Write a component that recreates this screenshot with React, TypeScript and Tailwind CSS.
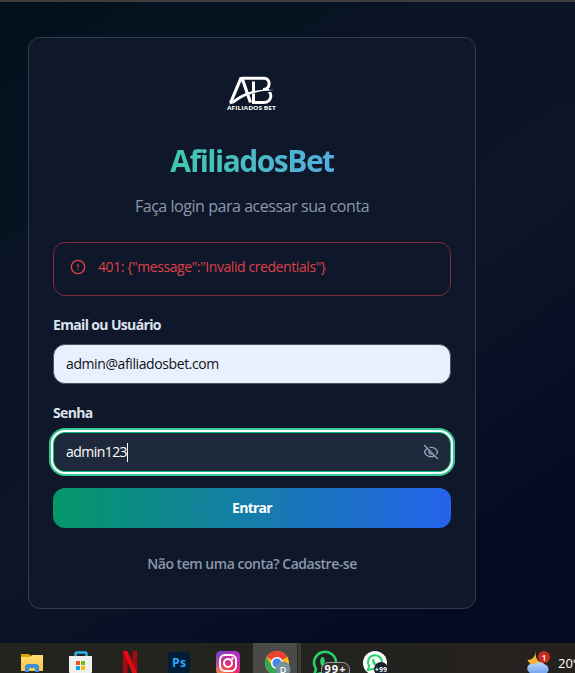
import React from "react";

const font = "font-['Open_Sans','Noto_Sans',sans-serif]";

function Logo() {
  return (
    <svg viewBox="0 0 52 36" className="h-9 w-[52px]" fill="none" stroke="white">
      <path d="M4.500 28 14.800 3.500h1.400l8.300 24" strokeWidth="3.200" />
      <path d="M16 3.300h22c7 0 7 11.200-1 11.200M27.500 6.500v21M26 27.500h11.500c9.500 0 9.500-12 1.500-13" strokeWidth="3" />
      <path d="M4 30C14 20 28 15.500 48 16.300" stroke="#0f172a" strokeWidth="1.500" />
      <path d="M3 29.500C13 18.500 28 13.300 49 15C31 15.300 17 20.500 8 28.300Z" fill="white" stroke="none" />
      <text x="1" y="34.600" fill="white" stroke="none" fontSize="6" fontWeight="700" textLength="49" lengthAdjust="spacingAndGlyphs" fontFamily="Open Sans, sans-serif">AFILIADOS BET</text>
    </svg>
  );
}

function AlertIcon() {
  return (
    <svg viewBox="0 0 24 24" className="h-4 w-4 shrink-0" fill="none" stroke="currentColor" strokeWidth="2" strokeLinecap="round">
      <circle cx="12" cy="12" r="10" />
      <path d="M12 8v4M12 16h.01" />
    </svg>
  );
}

function EyeOff() {
  return (
    <svg viewBox="0 0 24 24" className="h-4 w-4 text-slate-400" fill="none" stroke="currentColor" strokeWidth="2" strokeLinecap="round" strokeLinejoin="round">
      <path d="M9.880 9.880a3 3 0 1 0 4.240 4.240" />
      <path d="M10.730 5.080A10.430 10.430 0 0 1 12 5c7 0 10 7 10 7a13.160 13.160 0 0 1-1.670 2.680" />
      <path d="M6.610 6.610A13.526 13.526 0 0 0 2 12s3 7 10 7a9.740 9.740 0 0 0 5.390-1.610" />
      <path d="m2 2 20 20" />
    </svg>
  );
}

function Taskbar() {
  return (
    <footer className="h-[30px] w-full overflow-hidden bg-[#22231e]">
      <svg width="575" height="30" viewBox="0 0 575 30" fontFamily="Open Sans, sans-serif">
        <defs>
          <linearGradient id="bar" x1="0" x2="1">
            <stop stopColor="#22251d" />
            <stop offset="1" stopColor="#25211f" />
          </linearGradient>
          <linearGradient id="insta" x1="0" y1="1" x2="1" y2="0">
            <stop stopColor="#ffb02e" />
            <stop offset=".45" stopColor="#f02c62" />
            <stop offset="1" stopColor="#a32ce0" />
          </linearGradient>
          <linearGradient id="instaBlue" x1="0" y1="0" x2=".6" y2=".6">
            <stop stopColor="#4b52e8" />
            <stop offset="1" stopColor="#c02cb0" stopOpacity="0" />
          </linearGradient>
          <linearGradient id="cloud" x1="0" y1="0" x2="0" y2="1">
            <stop stopColor="#b7d6ff" />
            <stop offset="1" stopColor="#77a6ee" />
          </linearGradient>
          <linearGradient id="folder" x1="0" y1="0" x2="0" y2="1">
            <stop stopColor="#ffdd72" />
            <stop offset="1" stopColor="#f7c548" />
          </linearGradient>
        </defs>
        <rect width="575" height="30" fill="url(#bar)" />

        <path d="M21 11h8l2 2h11v15H21z" fill="#dfa008" />
        <path d="M21 14h9l2-2h11v16H21z" fill="url(#folder)" />
        <path d="M25 29v-6l2-2h10l2 2v6h-4v-4h-6v4z" fill="#3b91db" />

        <path d="M75.500 14v-3q0-1.500 1.500-1.500h8q1.500 0 1.500 1.500v3" fill="none" stroke="#28b3ee" strokeWidth="2.500" />
        <path d="M69 13h23v15q0 3-3 3H72q-3 0-3-3z" fill="#f1f1f1" />
        <path d="M76 18h4v4h-4z" fill="#f25022" />
        <path d="M81 18h4v4h-4z" fill="#7fba00" />
        <path d="M76 23h4v4h-4z" fill="#00a4ef" />
        <path d="M81 23h4v4h-4z" fill="#ffb900" />

        <path d="M123 8h4.500v22H123zM132.500 8h4.500v22h-4.500z" fill="#a90912" />
        <path d="M123 8h4.500l9.500 22h-4.800z" fill="#e50914" />

        <rect x="168" y="9" width="22" height="22" rx="4" fill="#001e36" />
        <text x="172" y="24" fill="#31a8ff" fontSize="12" fontWeight="700" textLength="14">Ps</text>

        <rect x="216" y="8" width="24" height="24" rx="5" fill="url(#insta)" />
        <rect x="216" y="8" width="24" height="24" rx="5" fill="url(#instaBlue)" />
        <rect x="220" y="12" width="16" height="16" rx="5" fill="none" stroke="white" strokeWidth="2" />
        <circle cx="228" cy="20" r="4" fill="none" stroke="white" strokeWidth="2" />
        <circle cx="232.500" cy="15.500" r="1.200" fill="white" />

        <rect x="253" width="44" height="30" fill="#4a4b46" />
        <rect x="298" width="3" height="30" fill="#3b3c36" />
        <circle cx="277" cy="20" r="12" fill="#fbc116" />
        <path d="M277 20 266.600 14A12 12 0 0 1 287.400 14Z" fill="#ea4335" />
        <path d="M266.600 14A12 12 0 0 0 277 32L282 23 272 23Z" fill="#34a853" />
        <circle cx="277" cy="20" r="6" fill="white" />
        <circle cx="277" cy="20" r="4.500" fill="#4285f4" />
        <circle cx="283" cy="26" r="7.500" fill="#78909c" />
        <text x="283" y="29.500" textAnchor="middle" fill="white" fontSize="9" fontWeight="600">D</text>

        <path d="M314 32 316 26A11 11 0 1 1 321 30Z" fill="#22251f" stroke="#25d366" strokeWidth="2.500" />
        <path d="M321 15q2-2 3 0l1 3-1 2q2 4 5 5l2-2 3 2q1 3-3 4-10-2-11-11z" fill="#25d366" />
        <rect x="321.500" y="19.500" width="28" height="16" rx="7" fill="#30302f" stroke="#a0a0a0" />
        <text x="324.500" y="30" fill="white" fontSize="11" fontWeight="700" textLength="21">99+</text>

        <circle cx="375" cy="20" r="12" fill="white" />
        <path d="M368 27 369 23A7 7 0 1 1 373 26Z" fill="none" stroke="#25d366" strokeWidth="2" />
        <path d="M372 16h2l1 3q1 3 4 3v2q-7 0-7-8" fill="#25d366" />
        <circle cx="381" cy="26" r="7" fill="#1c2033" />
        <text x="375" y="29" fill="white" fontSize="6.500" fontWeight="700" textLength="12">+99</text>

        <path d="M536 8q-1 6 1.500 9 2.500 3 7 2-3 5-9 4-6-1-8-6 7 0 8.500-9" fill="#f9b331" />
        <path d="M530 30a5 5 0 0 1 0-9q3 0 4 .500a7 6 0 0 1 11 0 5 5 0 0 1 2 8.500z" fill="url(#cloud)" />
        <circle cx="544" cy="14" r="6" fill="#c92b22" />
        <text x="544" y="17.500" textAnchor="middle" fill="white" fontSize="9" fontWeight="600">1</text>
        <text x="558" y="25" fill="white" fontSize="13">20°</text>
      </svg>
    </footer>
  );
}

export default function App() {
  return (
    <div className={`flex h-[673px] w-[575px] flex-col overflow-hidden bg-[#020817] ${font}`}>
      <main className="h-[643px] border-t-2 border-[#403d3e] bg-[linear-gradient(145deg,#03111c_0%,#0a1424_28%,#0d1529_55%,#050c22_85%,#030b20_100%)] pt-[35px] pl-7">
        <section className="h-[572px] w-[448px] rounded-xl border border-[#2f3d4f] bg-[#0f172a] px-6">
          <header className="flex flex-col items-center pt-[37px]">
            <Logo />
            <h1 className="mt-8 bg-linear-to-r/srgb from-[#40c9ac] to-[#55addf] bg-clip-text text-[30px] leading-9 font-bold tracking-[-1.5px] text-transparent">
              AfiliadosBet
            </h1>
            <p className="mt-[15px] text-base leading-6 tracking-[-0.45px] text-[#8b98aa]">Faça login para acessar sua conta</p>
          </header>
          <div className="mt-6 flex h-[54px] gap-3 rounded-xl border border-[#812d39] px-4 pt-4 text-[#df4148]">
            <AlertIcon />
            <span className="text-sm leading-[15px] tracking-[-0.42px]">401: {'{"message":"Invalid credentials"}'}</span>
          </div>
          <form>
            <label className="mt-[22px] block text-sm leading-[14px] font-bold tracking-[-0.65px] text-[#dce3ed]">Email ou Usuário</label>
            <div className="mt-3 flex h-10 items-center rounded-xl border border-[#46546a] bg-[#e8f0fe] px-3 text-sm tracking-[-0.4px] text-[#101115]">
              admin@afiliadosbet.com
            </div>
            <label className="mt-[22px] block text-sm leading-[14px] font-bold tracking-[-0.65px] text-[#dce3ed]">Senha</label>
            <div className="mt-3 flex h-10 items-center justify-between rounded-xl border border-[#10b981] bg-[#1e293b] pr-[11px] pl-3 text-sm font-medium tracking-[-0.55px] text-white ring-2 ring-[#34c98f] ring-offset-2 ring-offset-white">
              <span className="flex items-center">admin123<i className="h-[19px] w-px bg-white" /></span>
              <EyeOff />
            </div>
            <button type="button" className="mt-4 h-10 w-full rounded-xl bg-linear-to-r/srgb from-[#059669] to-[#2563eb] text-sm font-bold tracking-[-0.75px] text-white">
              Entrar
            </button>
          </form>
          <p className="mt-[26px] text-center text-sm leading-5 font-semibold tracking-[-0.47px] text-[#8b98aa]">Não tem uma conta? Cadastre-se</p>
        </section>
      </main>
      <Taskbar />
    </div>
  );
}
